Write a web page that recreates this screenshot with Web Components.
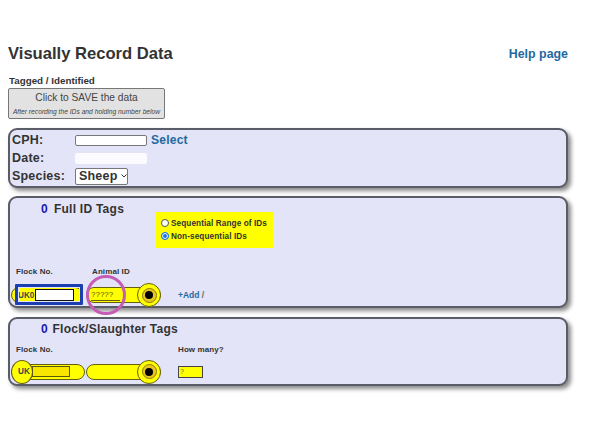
<!DOCTYPE html>
<html><head><meta charset="utf-8"><style>
html,body{margin:0;background:#fff}
body{font-family:"Liberation Sans",Arial,sans-serif;color:#333;width:592px;height:444px;overflow:hidden}
</style></head><body>
<record-page></record-page>
<script>
const def=(n,html)=>customElements.define(n,class extends HTMLElement{constructor(){super();this.attachShadow({mode:'open'}).innerHTML=html;}});
const eyeCss=`.eye{position:absolute;right:-1px;top:-5px;box-sizing:border-box;width:24px;height:24px;border-radius:50%;background:#ff0;border:1px solid #665f10;display:flex;align-items:center;justify-content:center}
.ring{box-sizing:border-box;width:15px;height:15px;border-radius:50%;background:#e8c820;border:1px solid #8a7a10;display:flex;align-items:center;justify-content:center}
.hole{width:8px;height:8px;border-radius:50%;background:#000}`;
const eye=`<span class="eye"><span class="ring"><span class="hole"></span></span></span>`;
def('ear-tag',`<style>
:host{display:block;position:relative;width:156px;height:24px}
.row{display:flex;align-items:center;height:24px}
.left{box-sizing:border-box;width:74px;height:16px;background:#ff0;border:1px solid #665f10;border-radius:8px;margin-right:1px;position:relative;display:flex;align-items:center}
.cap{position:absolute;left:-1px;top:-5px;box-sizing:border-box;width:22px;height:24px;border-radius:50%;background:#ff0;border:1px solid #665f10}
.uk{position:relative;font:bold 8.2px "Liberation Sans";color:#444;margin-left:6px;width:13px}
.box{position:relative;box-sizing:border-box;width:38px;height:11px;border:1px solid #5d5610;background:#f7e600;margin-left:1px}
.right{box-sizing:border-box;width:75px;height:16px;background:#ff0;border:1px solid #665f10;border-radius:8px;position:relative}
${eyeCss}
</style><div class="row"><div class="left"><span class="cap"></span><span class="uk">UK</span><span class="box"></span></div><div class="right">${eye}</div></div>`);
def('id-tag',`<style>
:host{display:block;position:relative;width:156px;height:24px}
.row{display:flex;align-items:center;height:24px}
.left{box-sizing:border-box;width:72px;height:16px;background:#ff0;border:1px solid #665f10;border-radius:8px;margin-right:3px;display:flex;align-items:center;padding-left:6px}
.uk{font:bold 8.2px "Liberation Sans";color:#444;width:17px}
.box{box-sizing:border-box;width:39px;height:12px;border:1.5px solid #111;background:#fff}
.right{box-sizing:border-box;width:75px;height:16px;background:#ff0;border:1px solid #665f10;border-radius:8px;position:relative;display:flex;align-items:center;padding-left:4px;font:8px "Liberation Sans";color:#55500f}
.q{border-bottom:1px solid #665f10;padding-right:7px;line-height:10px}
${eyeCss}
.focus{position:absolute;left:3.5px;top:1px;box-sizing:border-box;width:68px;height:21px;border:3px solid #1c3fb0;border-radius:1px;box-shadow:inset 0 0 0 1px #e3e4f8}
.circle{position:absolute;left:75px;top:-8px;box-sizing:border-box;width:40px;height:40px;border:3px solid #c55cb5;border-radius:50%}
</style><div class="row"><div class="left"><span class="uk">UK0</span><span class="box"></span></div><div class="right"><span class="q">?????</span>${eye}</div></div><span class="focus"></span><span class="circle"></span>`);
def('info-panel',`<style>
:host{display:block;box-sizing:border-box;margin:0 0 0 8px;width:560px;background:#e3e4f8;border:2px solid #5a5c68;border-radius:9px;box-shadow:3px 3px 4px #8a8a8a}
</style><slot></slot>`);
def('cph-panel',`<style>
:host{display:block;height:56px}
.grid{display:grid;grid-template-columns:63px auto 1fr;grid-auto-rows:18px;align-items:center;padding:1px 0 0 2px;font:bold 12.5px "Liberation Sans";color:#333;letter-spacing:.2px}
input{box-sizing:border-box;width:72px;height:11px;border:1px solid #777;border-radius:2px;background:#fff;padding:0;margin:0;display:block}
.d{border:0;background:#fbfbff}
a{color:#1f6aa0;margin-left:4px;font-size:12.1px}
.sel{box-sizing:border-box;display:flex;align-items:center;gap:3px;width:53px;height:17px;background:#fff;border:1px solid #777;border-radius:2px;padding-left:3px}
svg{width:6px;height:4px;flex:none}
</style><div class="grid"><span>CPH:</span><input aria-label="CPH"><a>Select</a><span>Date:</span><input class="d" aria-label="Date"><span></span><span>Species:</span><div class="sel">Sheep<svg viewBox="0 0 6 4"><path d="M.5.5 3 3 5.5.5" fill="none" stroke="#333" stroke-width="1"/></svg></div></div>`);
def('full-panel',`<style>
:host{display:block;height:108px}
.top{display:flex;padding:4px 0 0 31px;height:67.5px;box-sizing:border-box}
h3{margin:0;font:bold 12px "Liberation Sans";color:#333;letter-spacing:.25px;width:115px;height:14px}
b{color:#1a1ab0;margin-right:6px}
.radio{box-sizing:border-box;width:117px;height:36px;margin-top:10px;background:#ff0;padding:6px 0 0 5px;font:bold 8.2px "Liberation Sans";color:#333;letter-spacing:.1px;display:flex;flex-direction:column;gap:3px}
.radio div{display:flex;align-items:center;gap:2px;height:10px}
.r{box-sizing:border-box;width:8px;height:8px;border-radius:50%;background:#fff;border:1px solid #555}
.on{border:1.5px solid #1a73e8;background:#1a73e8;box-shadow:inset 0 0 0 1px #fff}
.labels{display:flex;padding-left:6px;font:bold 8px "Liberation Sans";color:#333;letter-spacing:.1px;height:11px;align-items:center}
.labels span{width:76px}
.row{display:flex;align-items:center;padding:6.5px 0 0 1px}
a{font:bold 8.5px "Liberation Sans";color:#1f6aa0;margin-left:11px}
i{font-style:normal;color:#666}
</style><div class="top"><h3><b>0</b>Full ID Tags</h3><div class="radio"><div><span class="r"></span>Sequential Range of IDs</div><div><span class="r on"></span>Non-sequential IDs</div></div></div><div class="labels"><span>Flock No.</span><span>Animal ID</span></div><div class="row"><id-tag></id-tag><a>+Add <i>/</i></a></div>`);
def('flock-panel',`<style>
:host{display:block;height:65px}
h3{margin:0;padding:2px 0 0 31px;height:18px;box-sizing:border-box;font:bold 12px "Liberation Sans";color:#333;letter-spacing:.25px;line-height:16px}
b{color:#1a1ab0;margin-right:1px}
.labels{display:flex;padding:6px 0 0 6px;height:12px;align-items:center;font:bold 8px "Liberation Sans";color:#333;letter-spacing:.1px}
.labels span:first-child{width:162px}
.row{display:flex;align-items:center;padding:4.5px 0 0 1px}
.n{box-sizing:border-box;margin-left:11px;width:25px;height:12px;background:#ff0;border:1.5px solid #444;font:7px "Liberation Sans";color:#665;padding-left:1px;line-height:9px}
</style><h3><b>0</b> Flock/Slaughter Tags</h3><div class="labels"><span>Flock No.</span><span>How many?</span></div><div class="row"><ear-tag></ear-tag><span class="n">?</span></div>`);
def('save-button',`<style>
:host{display:flex;flex-direction:column;align-items:center;box-sizing:border-box;width:157px;height:31px;background:#e2e2e2;border:1px solid #777;border-radius:2px;color:#444;padding-top:2px}
.a{font:10.2px/14px "Liberation Sans"}
.b{font:italic 6.7px/9px "Liberation Sans";margin-top:1.5px}
</style><span class="a">Click to SAVE the data</span><span class="b">After recording the IDs and holding number below</span>`);
def('record-page',`<style>
:host{display:block;padding-top:45px}
header{display:flex;justify-content:space-between;padding:0 24px 0 8px;align-items:center;height:18px}
h1{margin:0;font:bold 16.6px "Liberation Sans";color:#333}
a{font:bold 12.4px "Liberation Sans";color:#1f6aa0}
.t{margin:12px 0 0 9px;font:bold 9.8px/11px "Liberation Sans";color:#333}
save-button{margin:2px 0 9px 8px}
.g8{height:8px}.g9{height:9px}
</style><header><h1>Visually Record Data</h1><a>Help page</a></header><div class="t">Tagged / Identified</div><save-button></save-button>
<info-panel><cph-panel></cph-panel></info-panel><div class="g8"></div><info-panel><full-panel></full-panel></info-panel><div class="g9"></div><info-panel><flock-panel></flock-panel></info-panel>`);
</script></body></html>
